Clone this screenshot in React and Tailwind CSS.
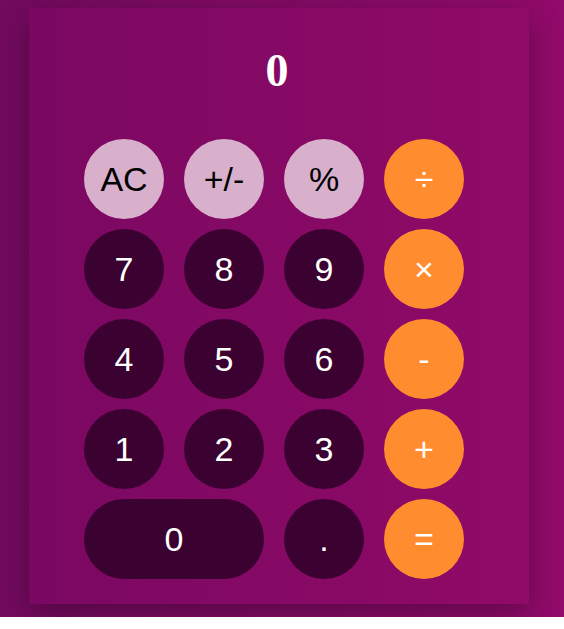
import React from "react";

const rows = [
  [
    { t: "AC", k: "l" },
    { t: "+/-", k: "l" },
    { t: "%", k: "l" },
    { t: "÷", k: "o" },
  ],
  [
    { t: "7", k: "d" },
    { t: "8", k: "d" },
    { t: "9", k: "d" },
    { t: "×", k: "o" },
  ],
  [
    { t: "4", k: "d" },
    { t: "5", k: "d" },
    { t: "6", k: "d" },
    { t: "-", k: "o" },
  ],
  [
    { t: "1", k: "d" },
    { t: "2", k: "d" },
    { t: "3", k: "d" },
    { t: "+", k: "o" },
  ],
];

const cls = {
  l: "bg-[#d8b0cc] text-black",
  d: "bg-[#3a0131] text-white",
  o: "bg-[#ff8c2f] text-white",
};

function Btn({ t, k, wide }) {
  return (
    <button
      className={
        "h-[80px] rounded-full flex items-center justify-center text-[34px] leading-none " +
        (wide ? "w-[180px] col-span-2 " : "w-[80px] ") +
        cls[k]
      }
      style={{ fontFamily: '"Liberation Sans", Arial, sans-serif' }}
    >
      {t}
    </button>
  );
}

export default function App() {
  return (
    <div className="h-[617px] bg-gradient-to-r from-[#720a5e] to-[#920a6a] pt-[8px] pl-[29px]">
      <div className="w-[500px] h-[596px] bg-gradient-to-r from-[#7a0862] to-[#900a67] shadow-[0_10px_30px_rgba(0,0,0,0.3)] flex flex-col">
        <div
          className="h-[131px] flex items-center justify-center pr-[4px] pb-[6px] text-white font-bold text-[46px]"
          style={{ fontFamily: '"Liberation Serif", "Times New Roman", serif' }}
        >
          0
        </div>
        <div className="ml-[55px] grid grid-cols-[repeat(4,80px)] gap-x-[20px] gap-y-[10px]">
          {rows.flat().map((b, i) => (
            <Btn key={i} {...b} />
          ))}
          <Btn t="0" k="d" wide />
          <Btn t="." k="d" />
          <Btn t="=" k="o" />
        </div>
      </div>
    </div>
  );
}
